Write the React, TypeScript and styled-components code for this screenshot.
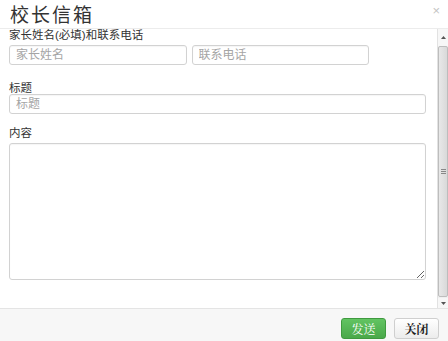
import styled, { createGlobalStyle } from 'styled-components';

const GlobalStyle = createGlobalStyle`
  html, body {
    margin: 0;
    padding: 0;
    background: #fff;
  }
  * {
    box-sizing: border-box;
  }
  body {
    font-family: 'Liberation Sans', 'Noto Sans CJK SC', sans-serif;
  }
`;

const Modal = styled.div`
  width: 448px;
  height: 341px;
  display: flex;
  flex-direction: column;
  background: #fff;
  overflow: hidden;
`;

const Header = styled.div`
  height: 29px;
  flex: 0 0 29px;
  display: flex;
  align-items: center;
  justify-content: space-between;
  padding: 0 10px 2px 10px;
  border-bottom: 1px solid #ececec;
  h3 {
    margin: 0;
    font-size: 19px;
    font-weight: 400;
    color: #333;
    letter-spacing: 2px;
  }
  .close {
    font-size: 13px;
    color: #c4c4c4;
    margin-top: -6px;
    margin-right: -2px;
  }
`;

const BodyRow = styled.div`
  flex: 1;
  display: flex;
  min-height: 0;
`;

const Content = styled.div`
  flex: 1;
  padding: 0 11px 0 9px;
  color: #333;
  font-size: 11.5px;
`;

const Field = styled.div<{ $after?: number }>`
  margin-bottom: ${(p) => p.$after ?? 0}px;
`;

const Label = styled.p<{ $gap?: number }>`
  margin: 0 0 ${(p) => p.$gap ?? 0}px 0;
  line-height: 12px;
  font-size: 11.5px;
  color: #333;
`;

const Pair = styled.div`
  display: flex;
  gap: 5px;
  width: 360px;
`;

const Input = styled.input`
  display: block;
  width: 100%;
  height: 20px;
  margin: 0;
  border: 1px solid #d2d2d2;
  border-radius: 3px;
  padding: 0 6px;
  font-family: inherit;
  font-size: 12px;
  color: #333;
  box-shadow: inset 0 1px 1px rgba(0, 0, 0, 0.04);
  &::placeholder {
    color: #a5a5a5;
  }
  &:focus {
    outline: none;
  }
`;

const TextArea = styled.textarea`
  display: block;
  width: 100%;
  height: 137px;
  margin: 0;
  border: 1px solid #d2d2d2;
  border-radius: 3px;
  resize: vertical;
  font-family: inherit;
  font-size: 12px;
  box-shadow: inset 0 1px 1px rgba(0, 0, 0, 0.04);
  &:focus {
    outline: none;
  }
`;

const ScrollBar = styled.div`
  width: 11px;
  flex: 0 0 11px;
  display: flex;
  flex-direction: column;
  background: #f0f0f0;
  border-left: 1px solid #e2e2e2;
  .arrow {
    height: 17px;
    display: flex;
    align-items: center;
    justify-content: center;
    background: #f7f7f7;
  }
  .arrow.down {
    height: 10px;
  }
  .thumb {
    flex: 1;
    margin: 0 0 1px 0;
    background: linear-gradient(to right, #e8e8e8, #d9d9d9);
    border: 1px solid #bdbdbd;
    border-radius: 2px;
    display: flex;
    align-items: center;
    justify-content: center;
  }
  .grip {
    width: 5px;
    height: 5px;
    border-top: 1px solid #888;
    border-bottom: 1px solid #888;
    position: relative;
  }
  .grip::after {
    content: '';
    position: absolute;
    left: 0;
    right: 0;
    top: 1px;
    border-top: 1px solid #888;
  }
`;

const Footer = styled.div`
  flex: 0 0 33px;
  height: 33px;
  display: flex;
  justify-content: flex-end;
  align-items: flex-start;
  gap: 8px;
  padding: 9px 9px 0 0;
  border-top: 1px solid #e4e4e4;
  background: #f7f7f7;
`;

const Button = styled.button<{ $primary?: boolean }>`
  width: 45px;
  height: 21px;
  padding: 0;
  border-radius: 3px;
  font-family: 'Liberation Serif', 'Noto Serif CJK SC', 'Noto Sans CJK SC', serif;
  font-size: 12px;
  font-weight: ${(p) => (p.$primary ? 'normal' : 'bold')};
  color: ${(p) => (p.$primary ? '#fff' : '#222')};
  border: 1px solid ${(p) => (p.$primary ? '#3f9a3f' : '#cfcfcf')};
  background: ${(p) =>
    p.$primary
      ? 'linear-gradient(#62c462, #4aa84a)'
      : 'linear-gradient(#ffffff, #ececec)'};
`;

const Arrow = ({ up }: { up?: boolean }) => (
  <svg width='5' height='3' viewBox='0 0 5 3'>
    <path d={up ? 'M0 3 L2.5 0 L5 3 Z' : 'M0 0 L2.5 3 L5 0 Z'} fill='#555' />
  </svg>
);

export default function App() {
  return (
    <>
      <GlobalStyle />
      <Modal>
        <Header>
          <h3>校长信箱</h3>
          <span className='close'>×</span>
        </Header>
        <BodyRow>
          <Content>
            <Field $after={17}>
              <Label $gap={4}>家长姓名(必填)和联系电话</Label>
              <Pair>
                <Input type='text' placeholder='家长姓名' />
                <Input type='text' placeholder='联系电话' />
              </Pair>
            </Field>
            <Field $after={13}>
              <Label>标题</Label>
              <Input type='text' placeholder='标题' />
            </Field>
            <Field>
              <Label $gap={4}>内容</Label>
              <TextArea />
            </Field>
          </Content>
          <ScrollBar>
            <div className='arrow'>
              <Arrow up />
            </div>
            <div className='thumb'>
              <div className='grip' />
            </div>
            <div className='arrow down'>
              <Arrow />
            </div>
          </ScrollBar>
        </BodyRow>
        <Footer>
          <Button $primary>发送</Button>
          <Button>关闭</Button>
        </Footer>
      </Modal>
    </>
  );
}
